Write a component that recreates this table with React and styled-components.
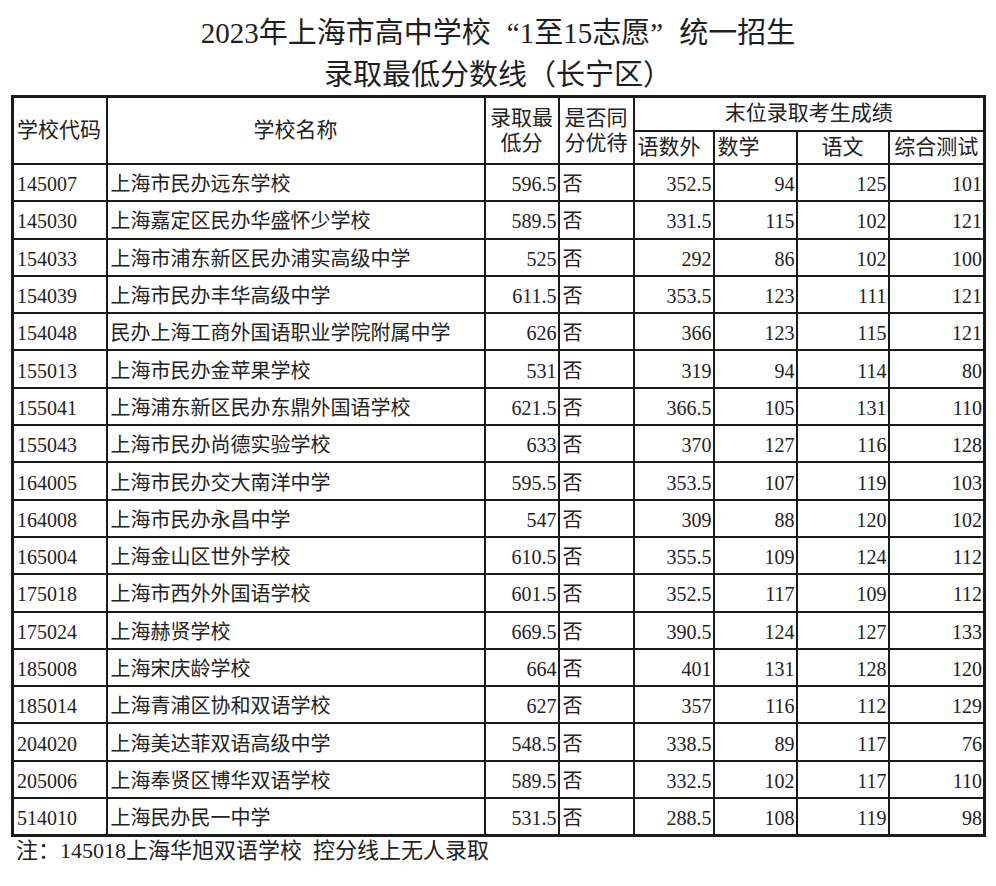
import styled, { createGlobalStyle } from "styled-components";

const GlobalStyle = createGlobalStyle`
  body {
    margin: 0;
    background: #ffffff;
    color: #222222;
    font-family: "Liberation Serif", "Noto Sans CJK SC", serif;
  }
`;

const Page = styled.div`
  width: 996px;
  padding: 12px 0 0;
`;

const Title = styled.h1`
  margin: 0;
  text-align: center;
  font-weight: normal;
  font-size: 29px;
  line-height: 42px;
  color: #1e1e1e;
`;

// full-width quote marks, as the original Song typeface sets them
const Quote = styled.span`
  display: inline-block;
  width: 1em;
  text-align: ${(p) => (p.$open ? "right" : "left")};
`;

const Table = styled.table`
  margin: -1px 0 0 11px;
  width: 972px;
  table-layout: fixed;
  border-collapse: collapse;
  border: 3px solid #1a1a1a;
`;

const Th = styled.th`
  border: 2px solid #1a1a1a;
  padding: 0 ${(p) => (p.$align === "center" ? 0 : 3)}px;
  font-weight: normal;
  font-size: 21px;
  line-height: 25px;
  text-align: ${(p) => p.$align || "center"};
  white-space: nowrap;
  height: 31.5px;
`;

const Td = styled.td`
  border: 2px solid #1a1a1a;
  padding: 3px ${(p) => (p.$align === "right" ? 1 : 3)}px 0;
  font-size: 20px;
  line-height: 28px;
  height: 32.3px;
  text-align: ${(p) => p.$align || "left"};
  white-space: nowrap;
  overflow: hidden;
`;

const Note = styled.p`
  margin: 0 0 0 16px;
  font-size: 22px;
  line-height: 28px;
`;

const widths = [94, 378, 74, 75, 80, 83, 92, 96];

const rows = [
  ["145007", "上海市民办远东学校", "596.5", "352.5", "94", "125", "101"],
  ["145030", "上海嘉定区民办华盛怀少学校", "589.5", "331.5", "115", "102", "121"],
  ["154033", "上海市浦东新区民办浦实高级中学", "525", "292", "86", "102", "100"],
  ["154039", "上海市民办丰华高级中学", "611.5", "353.5", "123", "111", "121"],
  ["154048", "民办上海工商外国语职业学院附属中学", "626", "366", "123", "115", "121"],
  ["155013", "上海市民办金苹果学校", "531", "319", "94", "114", "80"],
  ["155041", "上海浦东新区民办东鼎外国语学校", "621.5", "366.5", "105", "131", "110"],
  ["155043", "上海市民办尚德实验学校", "633", "370", "127", "116", "128"],
  ["164005", "上海市民办交大南洋中学", "595.5", "353.5", "107", "119", "103"],
  ["164008", "上海市民办永昌中学", "547", "309", "88", "120", "102"],
  ["165004", "上海金山区世外学校", "610.5", "355.5", "109", "124", "112"],
  ["175018", "上海市西外外国语学校", "601.5", "352.5", "117", "109", "112"],
  ["175024", "上海赫贤学校", "669.5", "390.5", "124", "127", "133"],
  ["185008", "上海宋庆龄学校", "664", "401", "131", "128", "120"],
  ["185014", "上海青浦区协和双语学校", "627", "357", "116", "112", "129"],
  ["204020", "上海美达菲双语高级中学", "548.5", "338.5", "89", "117", "76"],
  ["205006", "上海奉贤区博华双语学校", "589.5", "332.5", "102", "117", "110"],
  ["514010", "上海民办民一中学", "531.5", "288.5", "108", "119", "98"],
];

const App = () => {
  return (
    <Page>
      <GlobalStyle />
      <Title>
        2023年上海市高中学校<Quote $open>“</Quote>1至15志愿<Quote>”</Quote>统一招生
        <br />
        录取最低分数线（长宁区）
      </Title>
      <Table>
        <colgroup>
          {widths.map((w, i) => (
            <col key={i} style={{ width: w }} />
          ))}
        </colgroup>
        <thead>
          <tr>
            <Th rowSpan={2} $align="left">
              学校代码
            </Th>
            <Th rowSpan={2}>学校名称</Th>
            <Th rowSpan={2}>
              录取最
              <br />
              低分
            </Th>
            <Th rowSpan={2}>
              是否同
              <br />
              分优待
            </Th>
            <Th colSpan={4}>末位录取考生成绩</Th>
          </tr>
          <tr>
            <Th $align="left">语数外</Th>
            <Th $align="left">数学</Th>
            <Th>语文</Th>
            <Th>综合测试</Th>
          </tr>
        </thead>
        <tbody>
          {rows.map((r) => (
            <tr key={r[0]}>
              <Td>{r[0]}</Td>
              <Td>{r[1]}</Td>
              <Td $align="right">{r[2]}</Td>
              <Td>否</Td>
              <Td $align="right">{r[3]}</Td>
              <Td $align="right">{r[4]}</Td>
              <Td $align="right">{r[5]}</Td>
              <Td $align="right">{r[6]}</Td>
            </tr>
          ))}
        </tbody>
      </Table>
      <Note>注：145018上海华旭双语学校{"\u2002"}控分线上无人录取</Note>
    </Page>
  );
};

export default App;
